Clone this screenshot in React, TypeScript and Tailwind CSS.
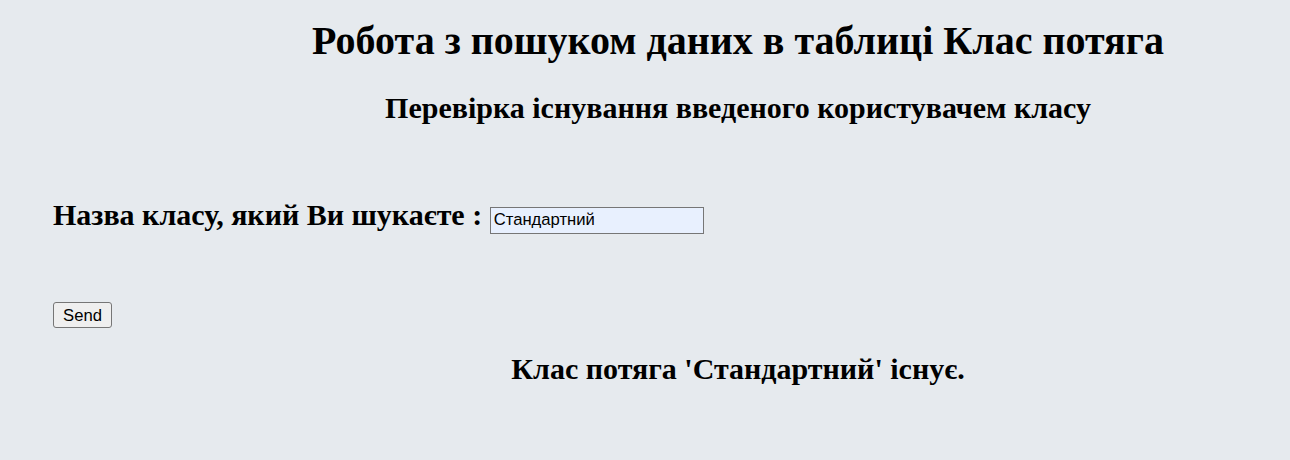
import React from "react";

export default function App() {
  const serif = { fontFamily: '"Liberation Serif", "Times New Roman", serif' };
  return (
    <div className="min-h-[460px] w-full overflow-hidden bg-[#e6eaee] text-black" style={serif}>
      <div className="flex flex-col pl-[53px]">
        <h1 className="mt-[18px] pl-[133px] text-center text-[40px] font-bold leading-[46px]">
          Робота з пошуком даних в таблиці Клас потяга
        </h1>
        <h2 className="mt-[27px] pl-[133px] text-center text-[30px] font-bold leading-[34px]">
          Перевірка існування введеного користувачем класу
        </h2>
        <h2 className="mt-[73px] text-[30px] font-bold leading-[34px]">
          Назва класу, який Ви шукаєте :{" "}
          <input
            type="text"
            defaultValue="Стандартний"
            className="box-border h-[27px] w-[214px] border border-[#767676] bg-[#e8f0fe] px-[3px] align-baseline text-[16.67px] font-normal leading-normal text-black outline-none"
            style={{ fontFamily: '"Liberation Sans", Arial, sans-serif' }}
          />
        </h2>
        <div className="mt-[68px]">
          <button
            className="box-border h-[26px] w-[59px] rounded-[3px] border border-[#767676] bg-[#efefef] text-[16.67px] leading-normal text-black"
            style={{ fontFamily: '"Liberation Sans", Arial, sans-serif' }}
          >
            Send
          </button>
        </div>
        <h2 className="mt-[24px] pl-[133px] text-center text-[30px] font-bold leading-[34px]">
          Клас потяга 'Стандартний' існує.
        </h2>
      </div>
    </div>
  );
}
